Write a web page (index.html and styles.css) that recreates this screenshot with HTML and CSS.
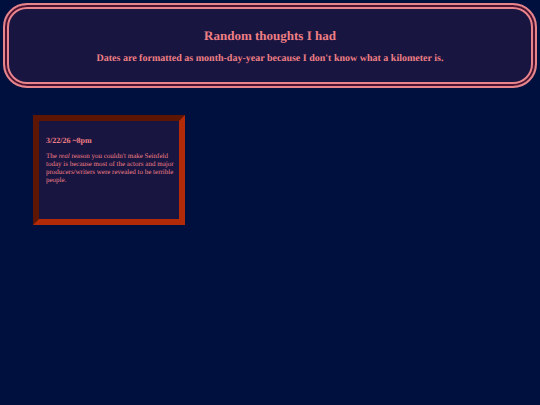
FILE: index.html
```html
<!DOCTYPE html>
<html lang="en">
<head>
<meta charset="utf-8">
<meta name="viewport" content="width=device-width, initial-scale=1">
<title>Random thoughts I had</title>
<link rel="stylesheet" href="styles.css">
</head>
<body>
<header class="banner">
<h1 class="banner-title">Random thoughts I had</h1>
<h2 class="banner-note">Dates are formatted as month-day-year because I don't know what a kilometer is.</h2>
</header>
<main class="thoughts">
<article class="thought">
<h3 class="thought-date">3/22/26 ~8pm</h3>
<p class="thought-text">The <em>real</em> reason you couldn't make Seinfeld today is because most of the actors and major producers/writers were revealed to be terrible people.</p>
</article>
</main>
</body>
</html>
```

FILE: styles.css
```css
* {
  box-sizing: border-box;
}

body {
  margin: 3px;
  background: #00103e;
  color: #ee7f84;
  font-family: "Liberation Serif", "Times New Roman", serif;
  text-rendering: geometricPrecision;
}

.banner {
  padding: 23px 20px 20px;
  border: 2px solid #e8848c;
  border-radius: 24px;
  background: #191541;
  box-shadow: inset 0 0 0 2px #4a1230, inset 0 0 0 4px #e8848c;
  text-align: center;
}

.banner-title {
  margin: 0 0 8px;
  font-size: 13px;
  line-height: 15px;
}

.banner-note {
  margin: 0;
  font-size: 10px;
  line-height: 15px;
}

.thoughts {
  display: grid;
  grid-template-columns: repeat(auto-fill, 152px);
  gap: 30px;
  padding: 27px 30px;
}

.thought {
  min-height: 110px;
  padding: 15px 3px 15px 7px;
  border: 6px inset #b22a08;
  background: #191541;
}

.thought-date {
  margin: 0 0 7px;
  font-size: 8px;
  line-height: 9px;
}

.thought-text {
  margin: 0;
  font-size: 7px;
  line-height: 8px;
}
```
